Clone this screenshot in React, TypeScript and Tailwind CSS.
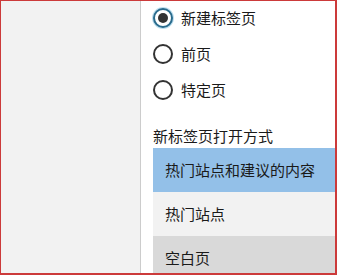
import React from "react";

const font = { fontFamily: '"Noto Sans CJK SC", "Noto Sans", sans-serif' };

const Radio = ({ checked, label }: { checked?: boolean; label: string }) => (
  <div className="flex items-center h-[36px]">
    <span
      className={`flex items-center justify-center w-[20px] h-[20px] rounded-full border-2 bg-white ${
        checked
          ? "border-[#2a6b8c] shadow-[0_0_0_1px_#bfe0f0]"
          : "border-[#333333]"
      }`}
    >
      {checked && <span className="w-[10px] h-[10px] rounded-full bg-[#333333]" />}
    </span>
    <span className="ml-[8px] text-[15px] leading-[20px] text-[#1a1a1a]">{label}</span>
  </div>
);

export default function App() {
  const options = [
    { label: "热门站点和建议的内容", cls: "bg-[#93c0e8]" },
    { label: "热门站点", cls: "bg-[#f2f2f2]" },
    { label: "空白页", cls: "bg-[#d9d9d9]" },
  ];

  return (
    <div
      className="w-[337px] h-[275px] overflow-hidden flex border-t border-l border-r-2 border-b-2 border-[#cc3a3a] bg-white"
      style={font}
    >
      {/* Left nav panel */}
      <div className="w-[140px] shrink-0 bg-[#f2f2f2] border-r border-[#cccccc]" />

      {/* Settings panel */}
      <div className="flex-1 flex flex-col pl-[12px] min-w-0">
        <div className="mt-[-1px]">
          <Radio checked label="新建标签页" />
          <Radio label="前页" />
          <Radio label="特定页" />
        </div>

        <div className="mt-[18px] mb-[2px] text-[15px] leading-[20px] text-[#1a1a1a] whitespace-nowrap">
          新标签页打开方式
        </div>

        <div className="flex flex-col">
          {options.map((o) => (
            <div
              key={o.label}
              className={`h-[44px] shrink-0 flex items-center px-[12px] text-[15px] text-[#1a1a1a] whitespace-nowrap ${o.cls}`}
            >
              {o.label}
            </div>
          ))}
        </div>
      </div>
    </div>
  );
}
